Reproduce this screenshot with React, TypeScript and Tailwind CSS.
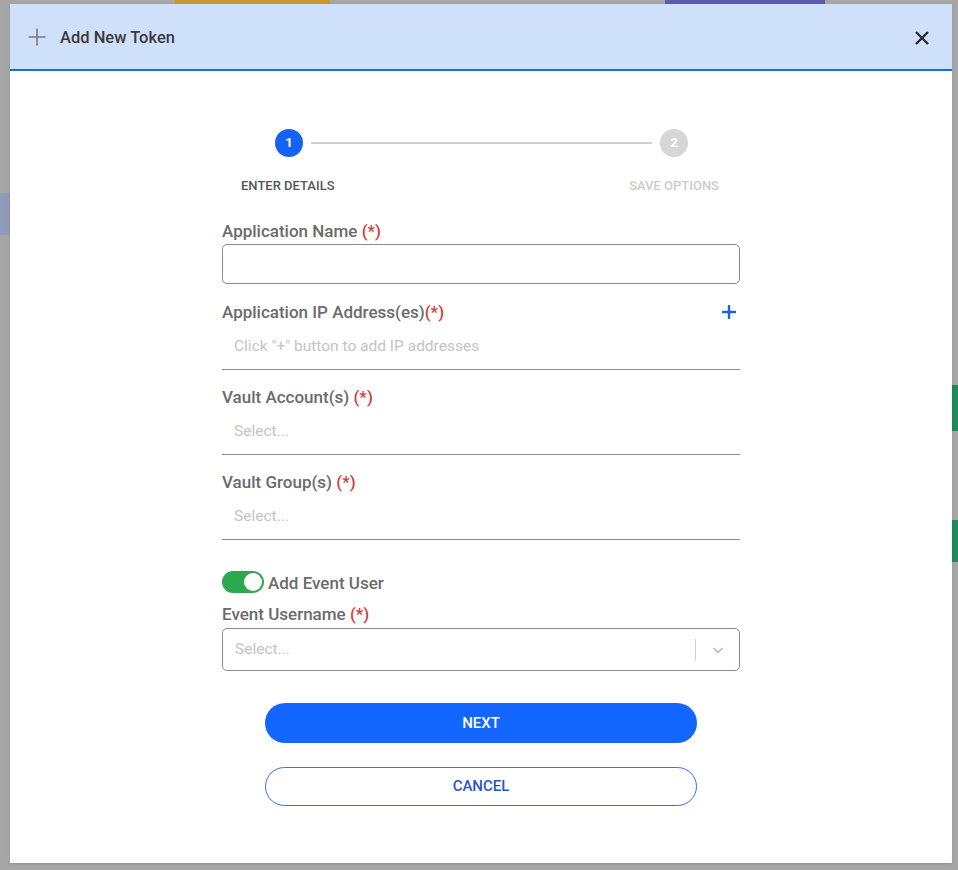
import React, { useState } from "react";

const Req = () => <span className="text-[#d43a3a]">(*)</span>;

const FieldLabel = ({ children }: { children: React.ReactNode }) => (
  <div className="h-5 text-[17px] leading-5 font-medium text-[#6b6b6b]">{children}</div>
);

const UnderlineField = ({ placeholder }: { placeholder: string }) => (
  <div className="h-[48px] flex items-center px-3 pt-[3px] border-b-[1.5px] border-[#8c8c8c] text-[15.5px] text-[#c4c4c4]">
    {placeholder}
  </div>
);

const App = () => {
  const [eventUser, setEventUser] = useState(true);

  return (
    <div
      className="relative w-[958px] h-[870px] bg-[#a6a6a6] overflow-hidden"
      style={{ fontFamily: "Roboto, 'Liberation Sans', sans-serif" }}
    >
      {/* background bits peeking behind the overlay */}
      <div className="absolute top-0 left-[175px] w-[155px] h-[6px] bg-[#c89a2c]" />
      <div className="absolute top-0 left-[665px] w-[160px] h-[6px] bg-[#5b5cb4]" />
      <div className="absolute top-[193px] left-0 w-[10px] h-[42px] bg-[#8f9bb8]" />
      <div className="absolute top-[385px] right-0 w-[6px] h-[46px] bg-[#1f8a5c]" />
      <div className="absolute top-[520px] right-0 w-[6px] h-[42px] bg-[#1f8a5c]" />

      <div className="relative ml-[10px] mt-[4px] w-[942px] h-[859px] bg-white flex flex-col shadow">
        {/* header */}
        <div className="h-[67px] bg-[#cfe0fb] border-b-2 border-[#1f68e0] flex items-center pl-[17px] pr-[22px]">
          <svg width="20" height="20" viewBox="0 0 20 20" className="mr-[13px]">
            <path d="M10 1.5v17M1.5 10h17" stroke="#7a7a7a" strokeWidth="1.6" />
          </svg>
          <span className="mt-[3px] text-[16.5px] font-medium text-[#3a3a3a]">Add New Token</span>
          <button className="ml-auto mt-[2px]">
            <svg width="16" height="16" viewBox="0 0 16 16">
              <path d="M2 2l12 12M14 2L2 14" stroke="#2b2b2b" strokeWidth="2.4" />
            </svg>
          </button>
        </div>

        {/* body */}
        <div className="w-[518px] mx-auto pt-[58px]">
          {/* stepper */}
          <div className="flex items-center pl-[53px] pr-[52px]">
            <div className="w-7 h-7 rounded-full bg-[#1463f3] text-white text-[13px] font-bold flex items-center justify-center">
              1
            </div>
            <div className="flex-1 h-[2px] bg-[#d0d0d0] mx-2" />
            <div className="w-7 h-7 rounded-full bg-[#d6d6d6] text-white text-[13px] font-bold flex items-center justify-center">
              2
            </div>
          </div>
          <div className="flex justify-between pl-[19px] pr-[21px] mt-[21px] text-[13px] leading-[16px] font-medium">
            <span className="text-[#555555]">ENTER DETAILS</span>
            <span className="text-[#cccccc]">SAVE OPTIONS</span>
          </div>

          {/* application name */}
          <div className="mt-[27px]">
            <FieldLabel>
              Application Name <Req />
            </FieldLabel>
            <div className="mt-[3px] h-[40px] rounded-[5px] border border-[#8a8a8a]" />
          </div>

          {/* ip addresses */}
          <div className="mt-[18px]">
            <div className="flex items-center justify-between">
              <FieldLabel>
                Application IP Address(es)
                <Req />
              </FieldLabel>
              <svg width="16" height="16" viewBox="0 0 16 16" className="mr-[3px]">
                <path d="M8 1v14M1 8h14" stroke="#2160d6" strokeWidth="2.4" />
              </svg>
            </div>
            <UnderlineField placeholder={'Click "+" button to add IP addresses'} />
          </div>

          <div className="mt-[17px]">
            <FieldLabel>
              Vault Account(s) <Req />
            </FieldLabel>
            <UnderlineField placeholder="Select..." />
          </div>

          <div className="mt-[17px]">
            <FieldLabel>
              Vault Group(s) <Req />
            </FieldLabel>
            <UnderlineField placeholder="Select..." />
          </div>

          {/* toggle */}
          <div className="mt-[31px] h-[22px] flex items-center">
            <button
              onClick={() => setEventUser(!eventUser)}
              className={`w-[42px] h-[22px] rounded-full p-[2px] flex ${
                eventUser ? "bg-[#2ea84f] justify-end" : "bg-[#c8c8c8] justify-start"
              }`}
            >
              <span className="w-[18px] h-[18px] rounded-full bg-white" />
            </button>
            <span className="ml-[4px] mt-[4px] text-[17px] font-medium text-[#6b6b6b]">Add Event User</span>
          </div>

          <div className="mt-[11px]">
            <FieldLabel>
              Event Username <Req />
            </FieldLabel>
            <div className="mt-[4px] h-[43px] rounded-[5px] border border-[#8a8a8a] flex items-center pl-3">
              <span className="flex-1 pt-[1px] text-[15.5px] text-[#c4c4c4]">Select...</span>
              <div className="w-px h-[22px] bg-[#d2d2d2]" />
              <div className="w-[43px] flex justify-center">
                <svg width="14" height="14" viewBox="0 0 14 14">
                  <path d="M2.5 5l4.5 4.5L11.5 5" stroke="#b5b5b5" strokeWidth="1.5" fill="none" />
                </svg>
              </div>
            </div>
          </div>

          {/* actions */}
          <div className="flex flex-col items-center">
            <button className="mt-[32px] w-[432px] h-[40px] rounded-full bg-[#1366ff] text-white text-[15px] font-medium">
              NEXT
            </button>
            <button className="mt-[24px] w-[432px] h-[39px] rounded-full border-[1.5px] border-[#3b6fe0] text-[#2a55c9] text-[15px] font-medium">
              CANCEL
            </button>
          </div>
        </div>
      </div>
    </div>
  );
};

export default App;
